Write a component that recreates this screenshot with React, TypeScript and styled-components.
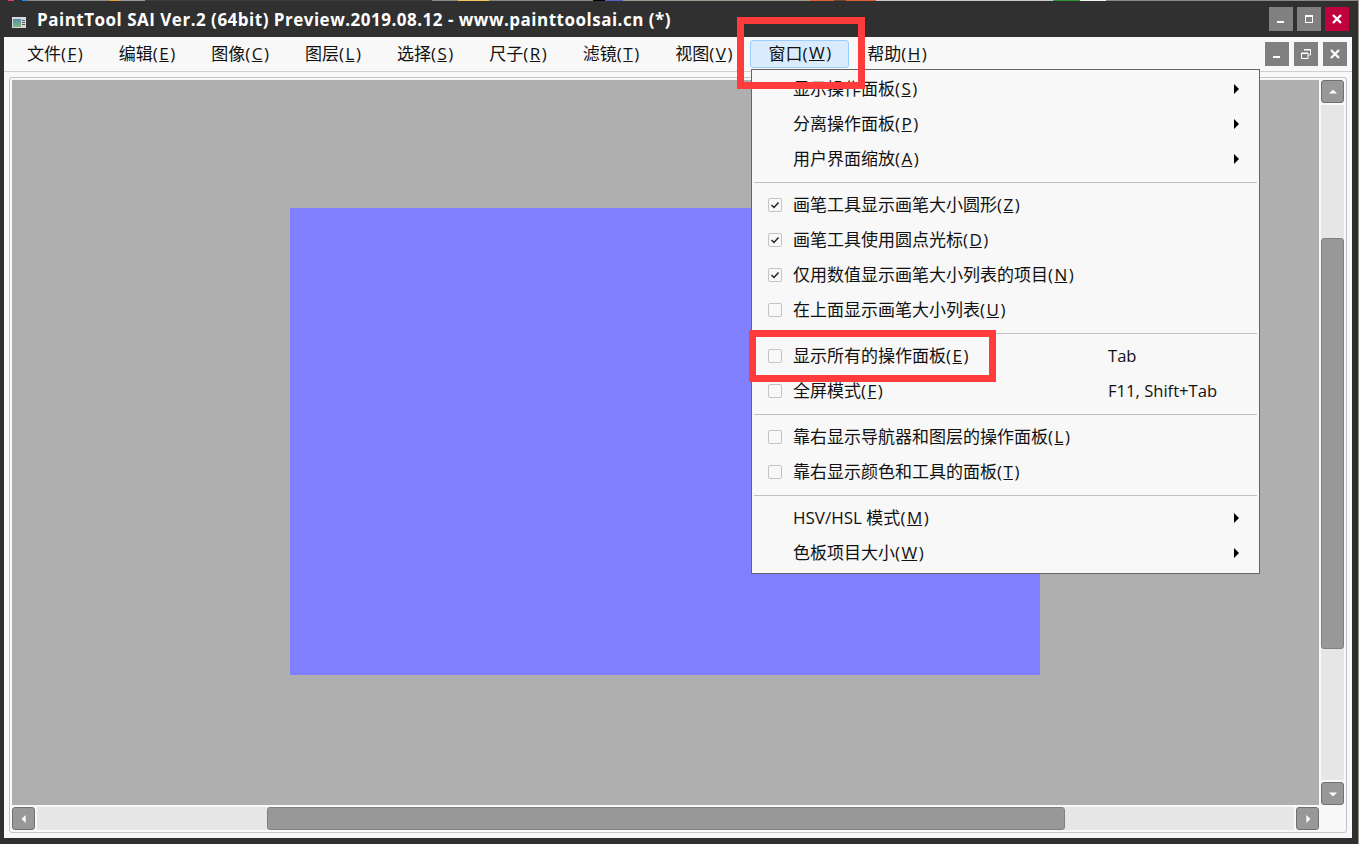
import React from "react";
import styled, { createGlobalStyle } from "styled-components";

const GlobalStyle = createGlobalStyle`
html, body {
    margin: 0;
    padding: 0;
    background: #303030;
}
body {
    width: 1359px;
    height: 844px;
    overflow: hidden;
    font-family: "Open Sans", "Noto Sans CJK SC", sans-serif;
}
`;

type MenuRow =
    | { kind: "sep" }
    | { kind: "item"; label: string; mnemonic: string; checked?: boolean; box?: boolean; shortcut?: string; sub?: boolean };

const menuBar = [
    { label: "文件", key: "F" },
    { label: "编辑", key: "E" },
    { label: "图像", key: "C" },
    { label: "图层", key: "L" },
    { label: "选择", key: "S" },
    { label: "尺子", key: "R" },
    { label: "滤镜", key: "T" },
    { label: "视图", key: "V" },
];

const rows: MenuRow[] = [
    { kind: "item", label: "显示操作面板", mnemonic: "S", sub: true },
    { kind: "item", label: "分离操作面板", mnemonic: "P", sub: true },
    { kind: "item", label: "用户界面缩放", mnemonic: "A", sub: true },
    { kind: "sep" },
    { kind: "item", label: "画笔工具显示画笔大小圆形", mnemonic: "Z", box: true, checked: true },
    { kind: "item", label: "画笔工具使用圆点光标", mnemonic: "D", box: true, checked: true },
    { kind: "item", label: "仅用数值显示画笔大小列表的项目", mnemonic: "N", box: true, checked: true },
    { kind: "item", label: "在上面显示画笔大小列表", mnemonic: "U", box: true },
    { kind: "sep" },
    { kind: "item", label: "显示所有的操作面板", mnemonic: "E", box: true, shortcut: "Tab" },
    { kind: "item", label: "全屏模式", mnemonic: "F", box: true, shortcut: "F11, Shift+Tab" },
    { kind: "sep" },
    { kind: "item", label: "靠右显示导航器和图层的操作面板", mnemonic: "L", box: true },
    { kind: "item", label: "靠右显示颜色和工具的面板", mnemonic: "T", box: true },
    { kind: "sep" },
    { kind: "item", label: "HSV/HSL 模式", mnemonic: "M", sub: true },
    { kind: "item", label: "色板项目大小", mnemonic: "W", sub: true },
];

const Label = ({ text, k }: { text: string; k: string }) => (
    <>
        {text}(<Mnemonic>{k}</Mnemonic>)
    </>
);

const Arrow = ({ dir, size = 10 }: { dir: "up" | "down" | "left" | "right"; size?: number }) => {
    const rot = { right: 0, down: 90, left: 180, up: 270 }[dir];
    return (
        <svg width={size} height={size} viewBox="0 0 10 10" style={{ transform: `rotate(${rot}deg)` }}>
            <path d="M3 0 L8 5 L3 10 Z" fill="currentColor" />
        </svg>
    );
};

const App = () => (
    <>
        <GlobalStyle />
        <Page>
            <DesktopStrip />
            <TitleBar>
                <AppIcon viewBox="0 0 14 11" width="14" height="11">
                    <defs>
                        <linearGradient id="pic" x1="0" y1="0" x2="0" y2="1">
                            <stop offset="0" stopColor="#4f8fb0" />
                            <stop offset="1" stopColor="#7fb87a" />
                        </linearGradient>
                    </defs>
                    <rect width="14" height="11" fill="#d8d8d8" />
                    <rect x="1" y="2" width="8" height="8" fill="url(#pic)" />
                    <rect x="10" y="3" width="3" height="1" fill="#5a5a5a" />
                    <rect x="10" y="5" width="3" height="1" fill="#5a5a5a" />
                    <rect x="10" y="7" width="3" height="1" fill="#5a5a5a" />
                </AppIcon>
                <Title>PaintTool SAI Ver.2 (64bit) Preview.2019.08.12 - www.painttoolsai.cn (*)</Title>
                <WinButtons>
                    <WinButton>
                        <svg width="12" height="12" viewBox="0 0 12 12"><rect x="2" y="8" width="7" height="2" fill="#fff" /></svg>
                    </WinButton>
                    <WinButton>
                        <svg width="12" height="12" viewBox="0 0 12 12"><path d="M2 2h8v8H2z M3 4v5h6V4z" fill="#fff" fillRule="evenodd" /></svg>
                    </WinButton>
                    <WinButton $close>
                        <svg width="12" height="12" viewBox="0 0 12 12"><path d="M2 2 L10 10 M10 2 L2 10" stroke="#fff" strokeWidth="2.4" /></svg>
                    </WinButton>
                </WinButtons>
            </TitleBar>
            <Client>
                <MenuBar>
                    <MenuList>
                        {menuBar.map((m) => (
                            <MenuBarItem key={m.key}>
                                <Label text={m.label} k={m.key} />
                            </MenuBarItem>
                        ))}
                        <ActiveItem>
                            <Label text="窗口" k="W" />
                        </ActiveItem>
                        <MenuBarItem>
                            <Label text="帮助" k="H" />
                        </MenuBarItem>
                    </MenuList>
                    <DocButtons>
                        <DocButton>
                            <svg width="12" height="12" viewBox="0 0 12 12"><rect x="2" y="8" width="7" height="2" fill="#fff" /></svg>
                        </DocButton>
                        <DocButton>
                            <svg width="12" height="12" viewBox="0 0 12 12"><path d="M4 1.5h6.5v5.5H8.5 M1.5 5h6.5v5.5H1.5z M1.5 5.5h6.5 M4 2h6.5" stroke="#fff" fill="none" /></svg>
                        </DocButton>
                        <DocButton>
                            <svg width="12" height="12" viewBox="0 0 12 12"><path d="M2 2 L10 10 M10 2 L2 10" stroke="#fff" strokeWidth="2.2" /></svg>
                        </DocButton>
                    </DocButtons>
                </MenuBar>
                <Frame>
                    <CanvasGrid>
                        <Canvas>
                            <Sheet />
                        </Canvas>
                        <VScroll>
                            <ScrollBtn><Arrow dir="up" size={8} /></ScrollBtn>
                            <VTrack>
                                <VThumb />
                            </VTrack>
                            <ScrollBtn><Arrow dir="down" size={8} /></ScrollBtn>
                        </VScroll>
                        <HScroll>
                            <ScrollBtn><Arrow dir="left" size={8} /></ScrollBtn>
                            <HTrack>
                                <HThumb />
                            </HTrack>
                            <ScrollBtn><Arrow dir="right" size={8} /></ScrollBtn>
                        </HScroll>
                    </CanvasGrid>
                </Frame>
            </Client>

            <Dropdown>
                {rows.map((r, i) =>
                    r.kind === "sep" ? (
                        <Separator key={i} />
                    ) : (
                        <Row key={i}>
                            <CheckCell>
                                {r.box && (
                                    <CheckBox>
                                        {r.checked && (
                                            <svg width="12" height="12" viewBox="0 0 12 12">
                                                <path d="M2.5 6 L5 8.5 L9.5 3.5" stroke="#222" strokeWidth="1.5" fill="none" />
                                            </svg>
                                        )}
                                    </CheckBox>
                                )}
                            </CheckCell>
                            <RowLabel>
                                <Label text={r.label} k={r.mnemonic} />
                            </RowLabel>
                            {r.shortcut && <Shortcut>{r.shortcut}</Shortcut>}
                            {r.sub && (
                                <SubArrow>
                                    <Arrow dir="right" />
                                </SubArrow>
                            )}
                        </Row>
                    )
                )}
            </Dropdown>

            <RedBoxWindow />
            <RedBoxItem />
        </Page>
    </>
);

export default App;

const Page = styled.div`
    position: relative;
    width: 1359px;
    height: 844px;
    background: #303030;
    box-shadow: inset -1px 0 0 #9a9288;
    display: flex;
    flex-direction: column;
    overflow: hidden;
    color: #111;
`;

const DesktopStrip = styled.div`
    height: 1px;
    background: linear-gradient(
        90deg,
        #2f2f2f 0 8px,
        #e0405a 8px 14px,
        #2f2f2f 14px 22px,
        #1e88e5 22px 28px,
        #8a8a8a 28px 110px,
        #e8a030 110px 120px,
        #9a9a9a 120px 145px,
        #3c3c3c 145px 432px,
        #8a8a80 432px 458px,
        #f0c860 458px 489px,
        #8a8a80 489px 593px,
        #000 593px 605px,
        #5860c0 605px 623px,
        #a09a90 623px 810px,
        #e06030 810px 834px,
        #704030 834px 846px,
        #e06030 846px 876px,
        #c8c8c8 876px 1053px,
        #2a9a30 1053px 1080px,
        #f4f4f4 1080px 1106px,
        #8a8a80 1106px
    );
`;

const TitleBar = styled.div`
    height: 36px;
    display: flex;
    align-items: center;
    padding: 0 10px 0 12px;
`;

const AppIcon = styled.svg`
    margin-top: 7px;
    flex: none;
`;

const Title = styled.div`
    margin-left: 11px;
    font-size: 17px;
    font-weight: 700;
    letter-spacing: 0.5px;
    color: #ffffff;
    white-space: nowrap;
    flex: 1;
`;

const WinButtons = styled.div`
    display: flex;
    gap: 4px;
    margin-top: -1px;
`;

const WinButton = styled.div<{ $close?: boolean }>`
    width: 24px;
    height: 24px;
    display: flex;
    align-items: center;
    justify-content: center;
    background: ${(p) => (p.$close ? "#c0003f" : "#808080")};
`;

const Client = styled.div`
    margin: 0 7px 6px 4px;
    height: 801px;
    background: #f8f8f8;
    display: flex;
    flex-direction: column;
`;

const MenuBar = styled.div`
    height: 34px;
    border-bottom: 1px solid #d0d0d0;
    display: flex;
    align-items: center;
    justify-content: space-between;
    padding: 0 5px 0 0;
`;

const MenuList = styled.div`
    display: flex;
    align-items: center;
    padding-left: 5px;
    font-size: 17px;
    white-space: nowrap;
`;

const Mnemonic = styled.span`
    margin: 0 1.5px;
    text-decoration: underline;
`;

const MenuBarItem = styled.div`
    padding: 0 18px 4px;
`;

const ActiveItem = styled.div`
    box-sizing: border-box;
    height: 28px;
    padding: 0 17px 3px;
    border: 1px solid #99ccff;
    border-radius: 3px;
    background: #d9ebfd;
    display: flex;
    align-items: center;
    white-space: pre;
`;

const DocButtons = styled.div`
    display: flex;
    gap: 5px;
`;

const DocButton = styled.div`
    width: 24px;
    height: 24px;
    display: flex;
    align-items: center;
    justify-content: center;
    background: #808080;
`;

const Frame = styled.div`
    box-sizing: border-box;
    margin: 5px;
    height: 756px;
    border: 1px solid #c4c4c4;
    border-radius: 3px;
    padding: 2px;
`;

const CanvasGrid = styled.div`
    display: grid;
    grid-template-columns: 1307px 23px;
    grid-template-rows: 725px 23px;
    gap: 2px;
`;

const Canvas = styled.div`
    background: #afafaf;
    display: flex;
    align-items: center;
    justify-content: center;
    padding: 0 1px 2px 0;
    box-sizing: border-box;
`;

const Sheet = styled.div`
    width: 750px;
    height: 467px;
    background: #8080ff;
`;

const VScroll = styled.div`
    display: flex;
    flex-direction: column;
    gap: 2px;
`;

const HScroll = styled.div`
    display: flex;
    gap: 2px;
`;

const ScrollBtn = styled.div`
    box-sizing: border-box;
    width: 23px;
    height: 23px;
    flex: none;
    border: 1px solid #707070;
    border-radius: 3px;
    background: #989898;
    color: #fff;
    display: flex;
    align-items: center;
    justify-content: center;
`;

const VTrack = styled.div`
    flex: 1;
    background: #e6e6e6;
    padding-top: 133px;
`;

const VThumb = styled.div`
    box-sizing: border-box;
    height: 411px;
    border: 1px solid #808080;
    border-radius: 3px;
    background: #989898;
`;

const HTrack = styled.div`
    flex: 1;
    background: #e6e6e6;
    padding-left: 230px;
`;

const HThumb = styled.div`
    box-sizing: border-box;
    width: 798px;
    height: 100%;
    border: 1px solid #808080;
    border-radius: 3px;
    background: #989898;
`;

const Dropdown = styled.div`
    position: absolute;
    left: 751px;
    top: 69px;
    width: 509px;
    height: 505px;
    box-sizing: border-box;
    border: 1px solid #666;
    background: #f8f8f8;
    padding-top: 1.5px;
`;

const Row = styled.div`
    position: relative;
    height: 35px;
    display: flex;
    align-items: center;
    font-size: 17px;
    white-space: nowrap;
`;

const CheckCell = styled.div`
    width: 41px;
    flex: none;
    display: flex;
    justify-content: flex-end;
`;

const CheckBox = styled.div`
    box-sizing: border-box;
    width: 14px;
    height: 14px;
    margin-right: 11px;
    border: 1px solid #c4c4c4;
    border-radius: 2px;
    display: flex;
    align-items: center;
    justify-content: center;
`;

const RowLabel = styled.div`
    flex: none;
    padding-bottom: 4px;
`;

const Shortcut = styled.div`
    position: absolute;
    left: 356px;
    font-size: 16.6px;
    padding-bottom: 2px;
`;

const SubArrow = styled.div`
    position: absolute;
    left: 479px;
    top: 12.5px;
    color: #000;
    line-height: 0;
`;

const Separator = styled.div`
    height: 1px;
    margin: 5px 2px;
    background: #c0c0c0;
`;

const RedBoxWindow = styled.div`
    position: absolute;
    left: 737px;
    top: 17px;
    width: 128px;
    height: 72px;
    box-sizing: border-box;
    border: 7px solid #ff3b3b;
`;

const RedBoxItem = styled.div`
    position: absolute;
    left: 749px;
    top: 330px;
    width: 247px;
    height: 52px;
    box-sizing: border-box;
    border: 7px solid #ff3b3b;
`;
